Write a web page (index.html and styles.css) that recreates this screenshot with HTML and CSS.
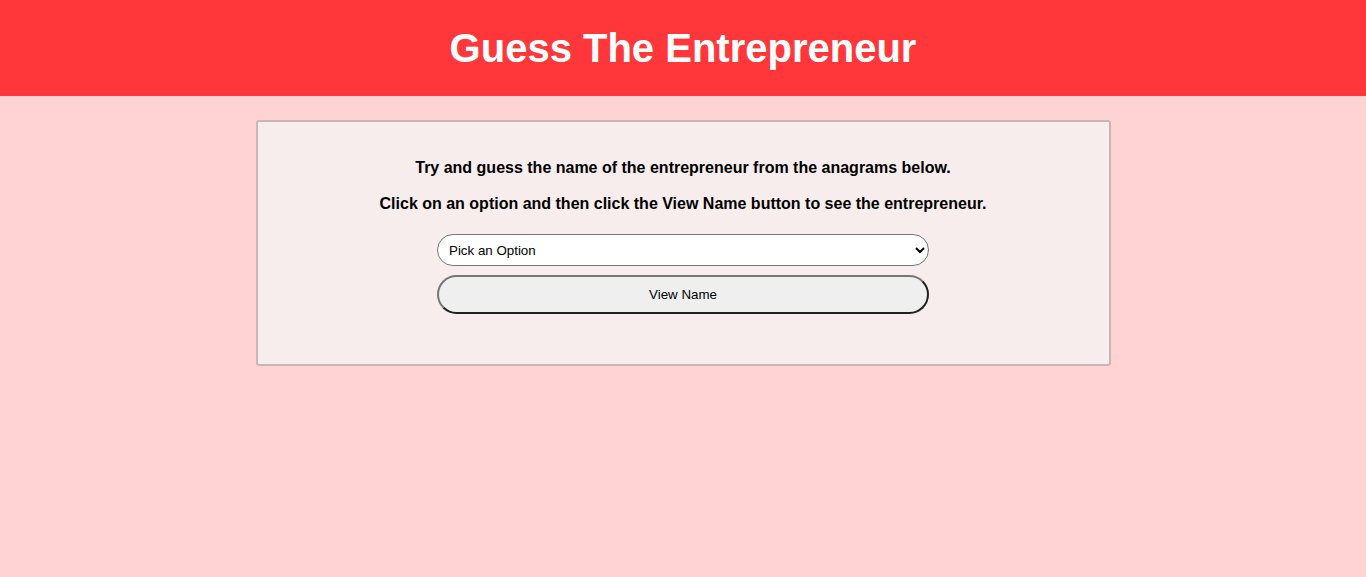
FILE: index.html
```html
<!DOCTYPE html>
<html lang="en">
<head>
<meta charset="utf-8">
<title>Guess The Entrepreneur</title>
<link rel="stylesheet" href="styles.css">
</head>
<body>
<header class="top">
  <h1 class="title">Guess The Entrepreneur</h1>
</header>
<main class="card">
  <p class="line first">Try and guess the name of the entrepreneur from the anagrams below.</p>
  <p class="line second">Click on an option and then click the View Name button to see the entrepreneur.</p>
  <select class="picker">
    <option>Pick an Option</option>
  </select>
  <button class="view" type="button">View Name</button>
</main>
</body>
</html>
```
FILE: styles.css
```css
html, body {
  margin: 0;
  padding: 0;
}
body {
  background: #ffd3d4;
  font-family: "Liberation Sans", Arial, sans-serif;
  min-height: 577px;
}
.top {
  background: #ff373a;
  height: 96px;
  display: flex;
  align-items: center;
  justify-content: center;
}
.title {
  margin: 0;
  color: #fff;
  font-size: 40px;
  line-height: 46px;
  font-weight: bold;
}
.card {
  width: 851px;
  margin: 24px auto 0;
  background: #f7edec;
  border: 2px solid #c9b6b6;
  border-radius: 3px;
  padding: 37px 0 50px;
  display: flex;
  flex-direction: column;
  align-items: center;
}
.line {
  margin: 0;
  font-size: 16px;
  line-height: 18px;
  font-weight: bold;
  color: #000;
}
.first { margin-bottom: 18px; }
.second { margin-bottom: 21px; }
.picker {
  width: 492px;
  height: 32px;
  border: 1px solid #767676;
  border-radius: 16px;
  background: #fff;
  padding: 0 6px 0 7px;
  font-family: "Liberation Sans", Arial, sans-serif;
  font-size: 13.33px;
  color: #000;
}
.view {
  width: 492px;
  height: 39px;
  margin-top: 9px;
  border: 2px outset #767676;
  border-radius: 20px;
  background: #efefef;
  font-family: "Liberation Sans", Arial, sans-serif;
  font-size: 13.33px;
  color: #000;
}
```
